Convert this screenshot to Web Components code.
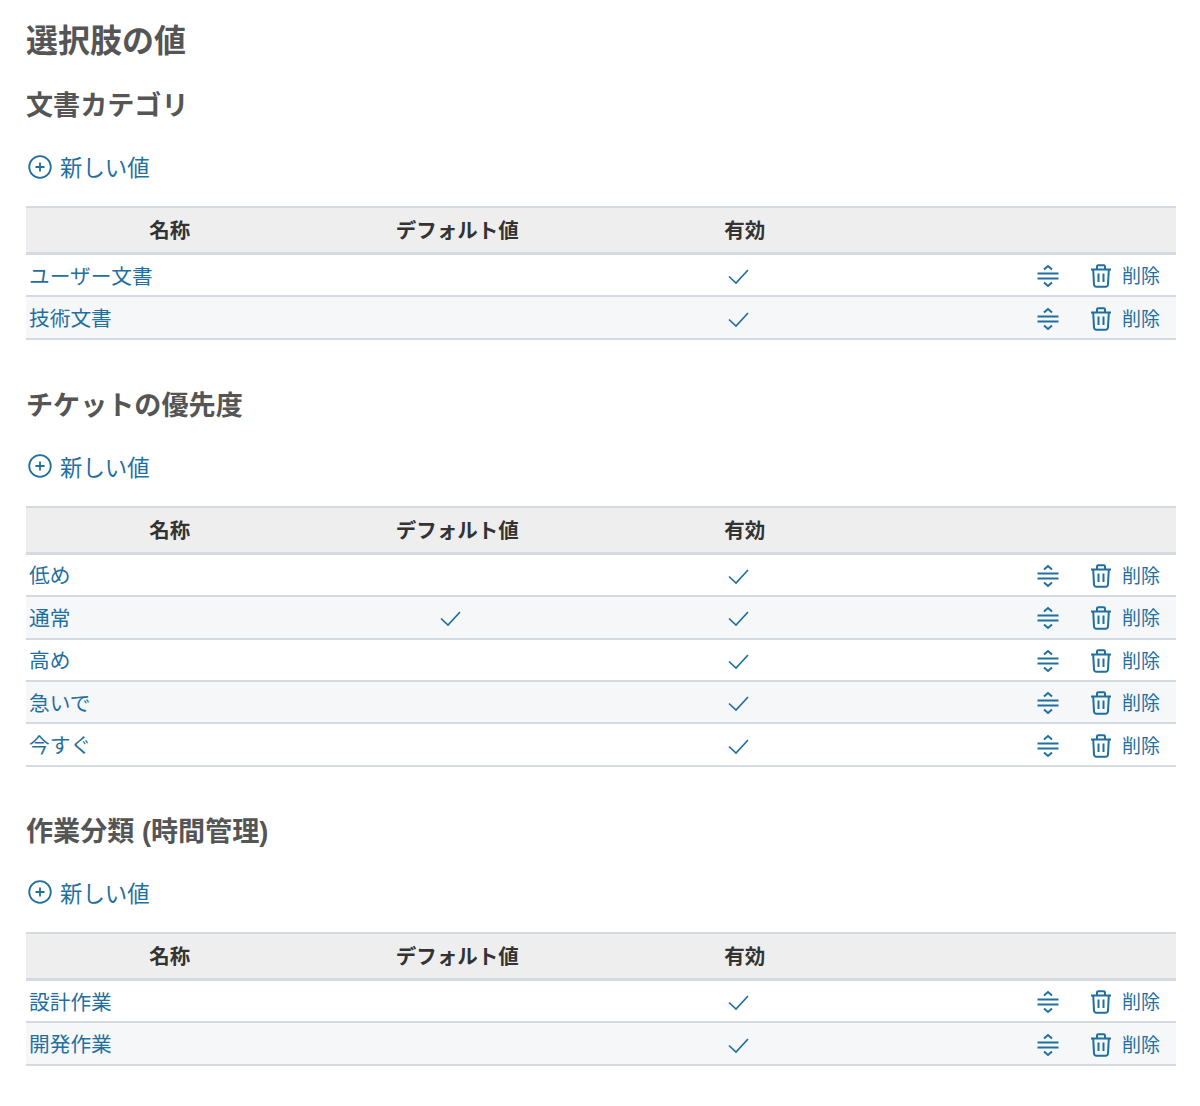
<!DOCTYPE html>
<html lang="ja">
<head>
<meta charset="utf-8">
<title>選択肢の値</title>
<style>
html, body { margin: 0; background: #fff; }
body { font-family: "Liberation Sans", "Noto Sans CJK JP", sans-serif; }
</style>
</head>
<body>
<option-page heading="選択肢の値">
  <option-section heading="文書カテゴリ">
    <option-row name="ユーザー文書"></option-row>
    <option-row name="技術文書"></option-row>
  </option-section>
  <option-section heading="チケットの優先度">
    <option-row name="低め"></option-row>
    <option-row name="通常" default></option-row>
    <option-row name="高め"></option-row>
    <option-row name="急いで"></option-row>
    <option-row name="今すぐ"></option-row>
  </option-section>
  <option-section heading="作業分類 (時間管理)">
    <option-row name="設計作業"></option-row>
    <option-row name="開発作業"></option-row>
  </option-section>
</option-page>

<script>
const FONT = '"Liberation Sans", "Noto Sans CJK JP", sans-serif';
const BLUE = '#1f6f9f';

const CHECK = `<svg width="24" height="24" viewBox="0 0 24 24" fill="none" stroke="${BLUE}" stroke-width="1.7"><path d="M2 12.5l7 6.5L21 6"/></svg>`;
const SORT = `<svg width="24" height="26" viewBox="0 0 24 26" fill="none" stroke="${BLUE}" stroke-width="2"><path d="M8 6.5l4-3.5 4 3.5M1.5 10.5h21M1.5 15.5h21M8 19.5l4 3.5 4-3.5"/></svg>`;
const TRASH = `<svg width="22" height="24" viewBox="0 0 22 24" fill="none" stroke="${BLUE}" stroke-width="2" stroke-linejoin="round"><path d="M1 5.5h20M7 5.5V2.5q0-1.2 1.2-1.2h5.6q1.2 0 1.2 1.2v3M3.2 5.5l.8 15q.2 2.2 2.4 2.2h9.2q2.2 0 2.4-2.2l.8-15M8.5 9.5v8.5M13.5 9.5v8.5"/></svg>`;
const PLUS = `<svg width="24" height="24" viewBox="0 0 24 24" fill="none" stroke="${BLUE}" stroke-width="1.8"><circle cx="12" cy="12" r="10.8"/><path d="M12 7.5v9M7.5 12h9"/></svg>`;

class OptionPage extends HTMLElement {
  constructor() {
    super();
    this.attachShadow({mode: "open"});
  }
  connectedCallback() {
    this.shadowRoot.innerHTML = `
      <style>
        :host { display: block; padding: 19px 24px 0 26px; font-family: ${FONT}; }
        h1 { margin: 0 0 18px; font-size: 32px; line-height: 44px; font-weight: 700; color: #555; }
      </style>
      <h1>${this.getAttribute("heading")}</h1>
      <slot></slot>`;
  }
}

class OptionSection extends HTMLElement {
  constructor() {
    super();
    this.attachShadow({mode: "open"});
  }
  connectedCallback() {
    this.shadowRoot.innerHTML = `
      <style>
        :host { display: block; margin-bottom: 41px; }
        :host(:nth-of-type(2)) { margin-bottom: 40.2px; }
        h2 { margin: 0; font-size: 27.1px; line-height: 38px; font-weight: 700; color: #555; padding-top: 6px; }
        .new { display: flex; align-items: center; gap: 8px; margin: 23px 0 0 2px; height: 38px; color: ${BLUE}; font-size: 22.4px; }
        .new svg { display: block; margin-top: -1px; }
        .new span { padding-bottom: 2px; }
        .head { display: grid; grid-template-columns: repeat(4, 1fr); margin-top: 20px; height: 42px; padding-bottom: 2px; align-items: center;
          background: #eee; border-top: 2px solid #d5dae2; border-bottom: 3px solid #d5dae2;
          font-size: 20.5px; font-weight: 700; color: #333; text-align: center; }
      </style>
      <h2>${this.getAttribute("heading")}</h2>
      <div class="new">${PLUS}<span>新しい値</span></div>
      <div class="head"><span>名称</span><span>デフォルト値</span><span>有効</span><span></span></div>
      <slot></slot>`;
  }
}

class OptionRow extends HTMLElement {
  constructor() {
    super();
    this.attachShadow({mode: "open"});
  }
  connectedCallback() {
    const isDefault = this.hasAttribute("default");
    this.shadowRoot.innerHTML = `
      <style>
        :host { display: grid; grid-template-columns: repeat(4, 1fr); height: 40.4px; align-items: center;
          border-bottom: 2px solid #d5dae2; color: ${BLUE}; font-size: 20.7px; }
        :host(:nth-of-type(even)) { background: #f5f7f9; }
        .name { padding-left: 3px; padding-bottom: 1px; }
        .check { display: flex; justify-content: center; padding-right: 12px; padding-top: 2px; }
        .actions { display: flex; justify-content: flex-end; align-items: center; padding-right: 16px; }
        .actions svg { display: block; }
        .sort { margin-right: 29.5px; padding-top: 2px; }
        .trash { margin-right: 10px; padding-top: 2px; }
        .del { font-size: 19px; padding-bottom: 1px; }
      </style>
      <span class="name">${this.getAttribute("name")}</span>
      <span class="check">${isDefault ? CHECK : ""}</span>
      <span class="check">${CHECK}</span>
      <span class="actions">
        <span class="sort">${SORT}</span>
        <span class="trash">${TRASH}</span>
        <span class="del">削除</span>
      </span>`;
  }
}

customElements.define("option-page", OptionPage);
customElements.define("option-section", OptionSection);
customElements.define("option-row", OptionRow);
</script>
</body>
</html>
